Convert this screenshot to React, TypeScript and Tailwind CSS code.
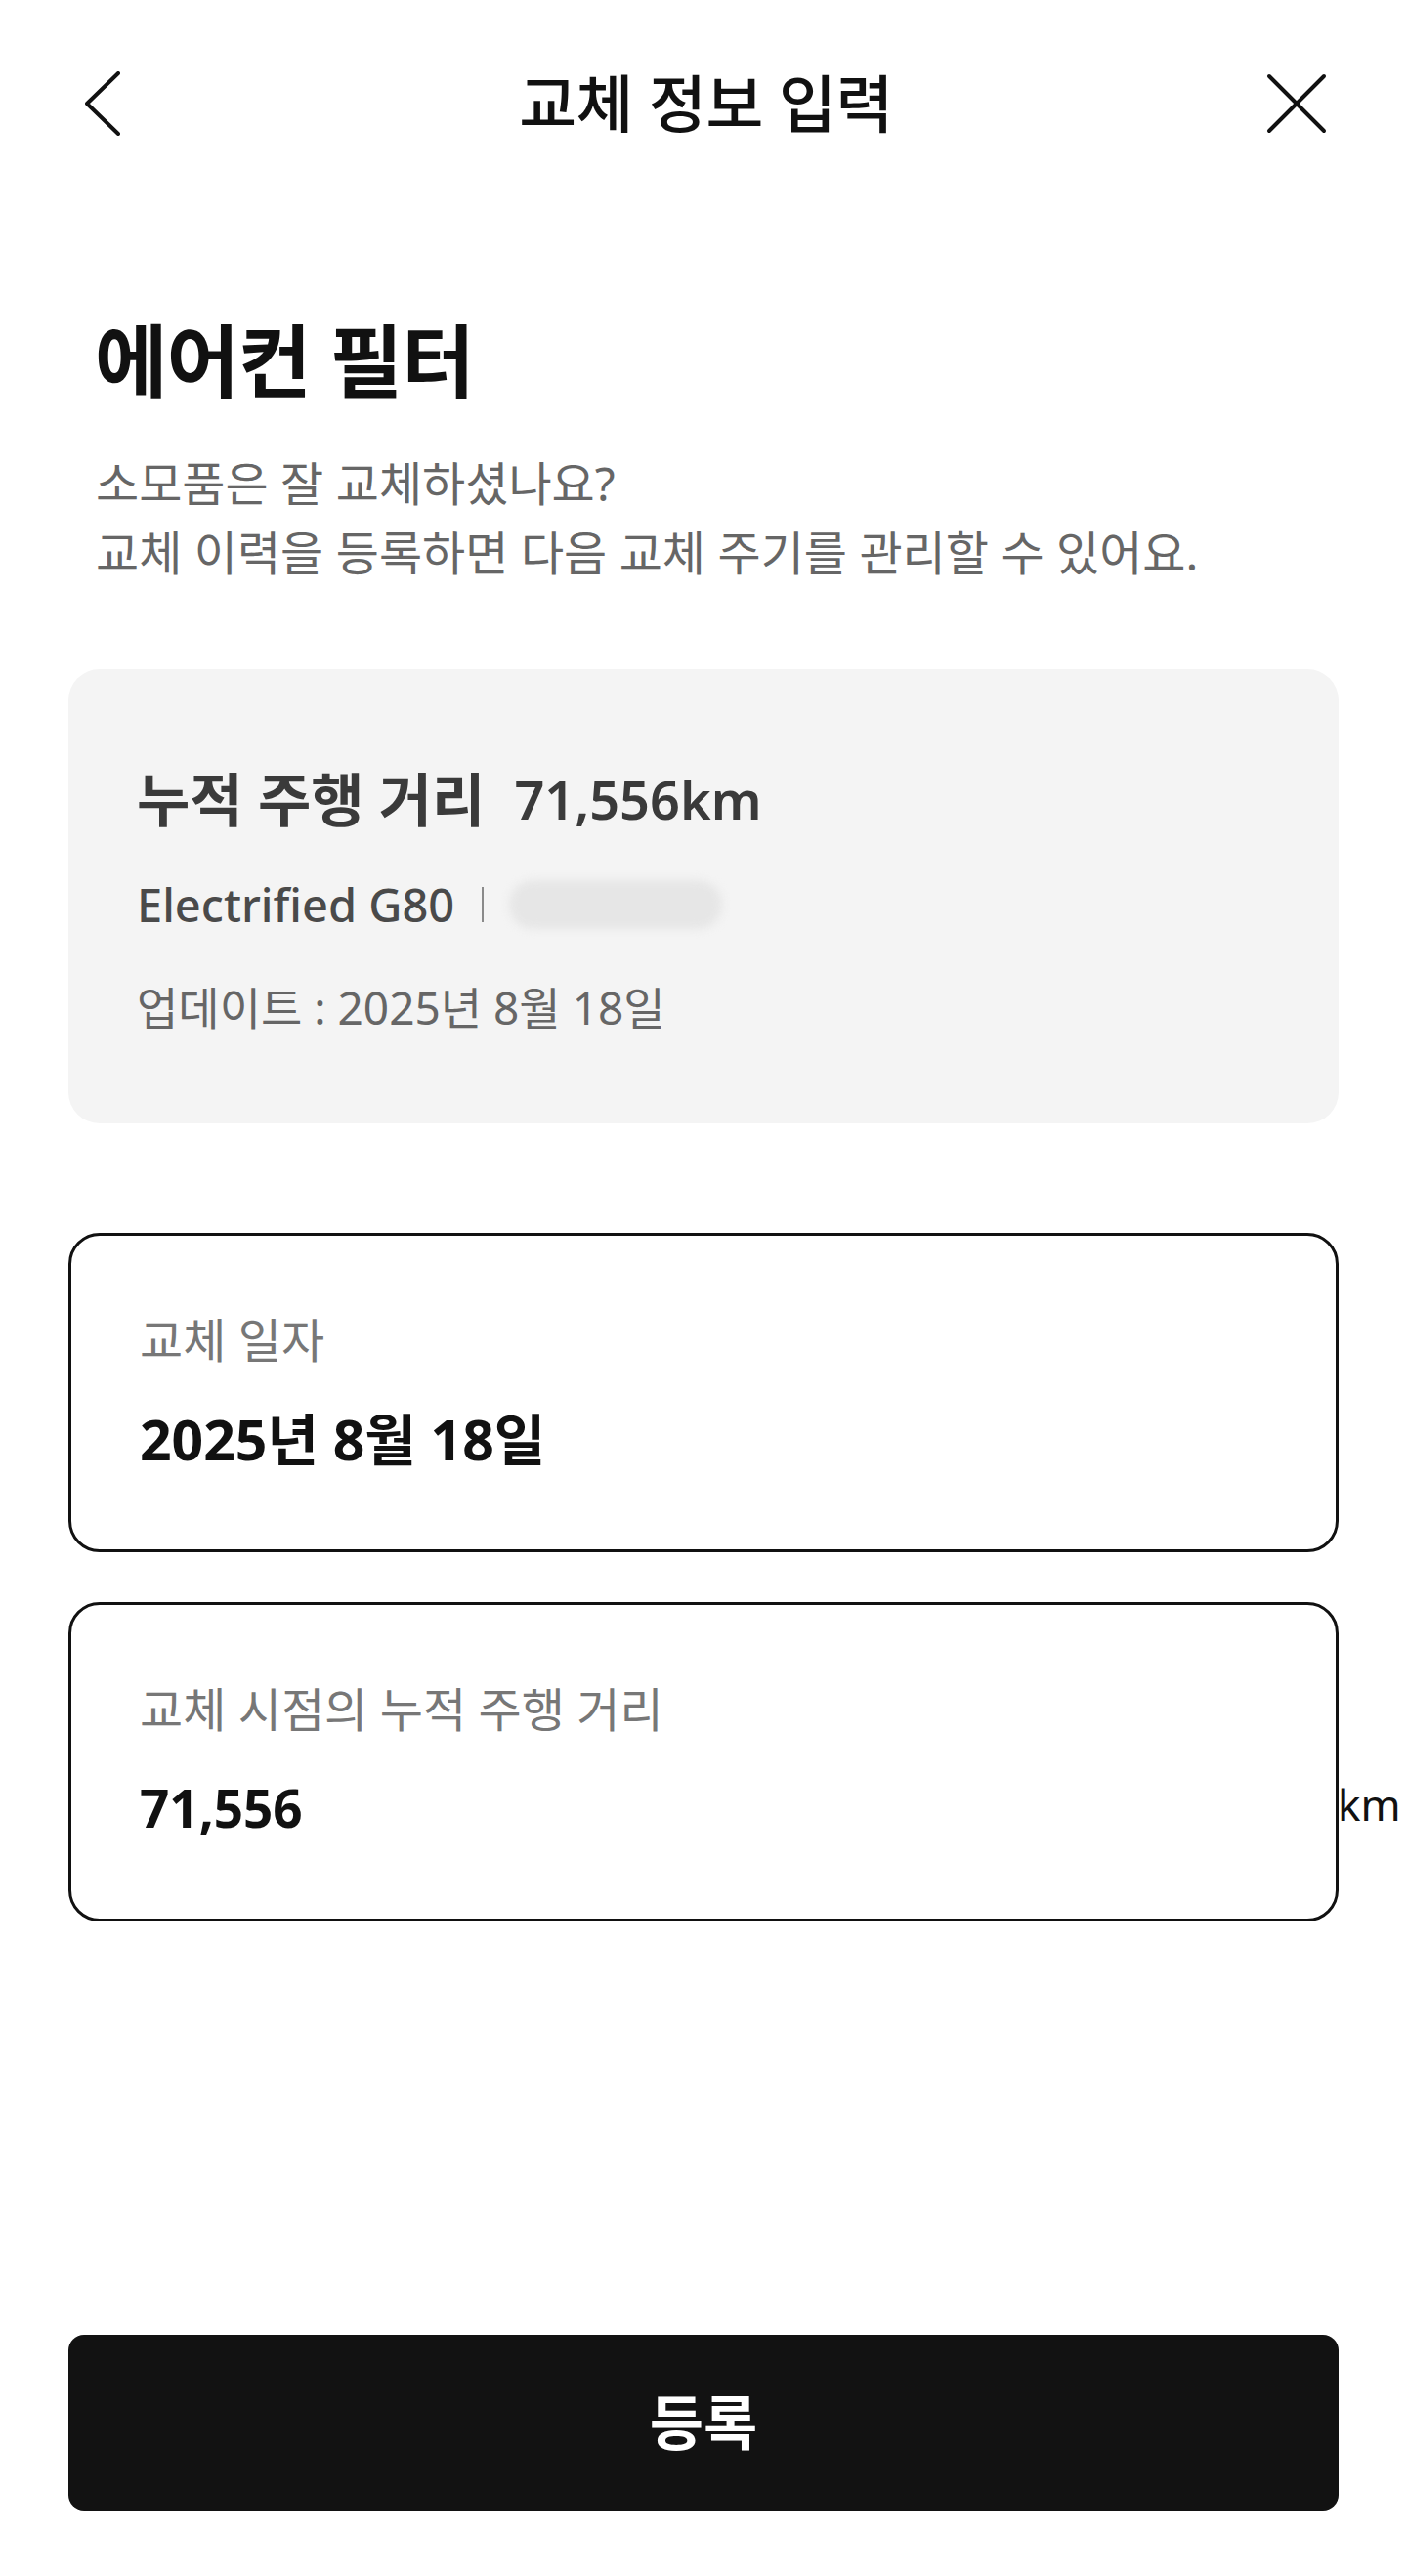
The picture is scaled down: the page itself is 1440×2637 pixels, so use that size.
import React from "react";

const FONT = { fontFamily: '"Noto Sans", "Noto Sans CJK KR", sans-serif' };

function BackIcon() {
  return (
    <svg width="36" height="66" viewBox="0 0 36 66" fill="none" stroke="#111" strokeWidth={4} strokeLinecap="round" strokeLinejoin="round">
      <polyline points="34,2 2,33 34,64" />
    </svg>
  );
}

function CloseIcon() {
  return (
    <svg width="62" height="62" viewBox="0 0 62 62" fill="none" stroke="#111" strokeWidth={4} strokeLinecap="round">
      <line x1="3" y1="3" x2="59" y2="59" />
      <line x1="59" y1="3" x2="3" y2="59" />
    </svg>
  );
}

function Field({
  label,
  value,
  valueSize,
  unit,
}: {
  label: string;
  value: string;
  valueSize: string;
  unit?: string;
}) {
  return (
    <div className="relative border-[3px] border-[#111] rounded-[32px] pl-[70px] pr-[40px] pt-[77px] pb-[78px]">
      <div className="text-[48px] leading-[60px] text-[#777]">{label}</div>
      <div className={`mt-[36px] leading-[70px] font-bold text-[#111] ${valueSize}`}>{value}</div>
      {unit && (
        <span className="absolute left-full top-[174px] ml-[2px] text-[44px] leading-[60px] text-[#111]">
          {unit}
        </span>
      )}
    </div>
  );
}

export default function App() {
  return (
    <div className="min-h-[2637px] w-full bg-white flex flex-col" style={FONT}>
      {/* Header */}
      <header className="h-[212px] grid grid-cols-[1fr_auto_1fr] items-center pl-[87px] pr-[82px]">
        <div className="flex">
          <BackIcon />
        </div>
        <h1 className="text-[64px] leading-[80px] font-medium text-[#111] tracking-[-0.5px]">교체 정보 입력</h1>
        <div className="flex justify-end">
          <CloseIcon />
        </div>
      </header>

      <main className="flex-1 px-[70px]">
        <h2 className="mt-[111px] text-[81px] leading-[91px] font-bold text-[#111] tracking-[-1px] pl-[27px]">
          에어컨 필터
        </h2>
        <p className="mt-[45px] text-[48px] leading-[71px] text-[#666] pl-[28px]">
          소모품은 잘 교체하셨나요?
          <br />
          교체 이력을 등록하면 다음 교체 주기를 관리할 수 있어요.
        </p>

        {/* Mileage summary */}
        <section className="mt-[84px] bg-[#f4f4f4] rounded-[32px] pl-[70px] pr-[40px] pt-[98px] pb-[89px]">
          <div className="flex items-center gap-[30px] leading-[70px] font-bold text-[#3a3a3a]">
            <span className="text-[59px]">누적 주행 거리</span>
            <span className="text-[54px] font-semibold">71,556km</span>
          </div>
          <div className="mt-[41px] flex items-center text-[47px] leading-[64px] font-medium text-[#4a4a4a]">
            <span>Electrified G80</span>
            <span className="ml-[28px] w-[2px] h-[36px] bg-[#8a8a8a]" />
            <span className="ml-[26px] w-[218px] h-[50px] rounded-full bg-[#e6e6e6] blur-[4px]" />
          </div>
          <div className="mt-[43px] text-[46px] leading-[60px] text-[#666]">
            업데이트 : 2025년 8월 18일
          </div>
        </section>

        <div className="mt-[112px] flex flex-col gap-[51px]">
          <Field label="교체 일자" value="2025년 8월 18일" valueSize="text-[57px]" />
          <Field label="교체 시점의 누적 주행 거리" value="71,556" valueSize="text-[53px]" unit="km" />
        </div>
      </main>

      <div className="px-[70px] mb-[67px]">
        <button className="w-full h-[180px] rounded-[16px] bg-[#121212] text-white text-[60px] font-bold">
          등록
        </button>
      </div>
    </div>
  );
}
